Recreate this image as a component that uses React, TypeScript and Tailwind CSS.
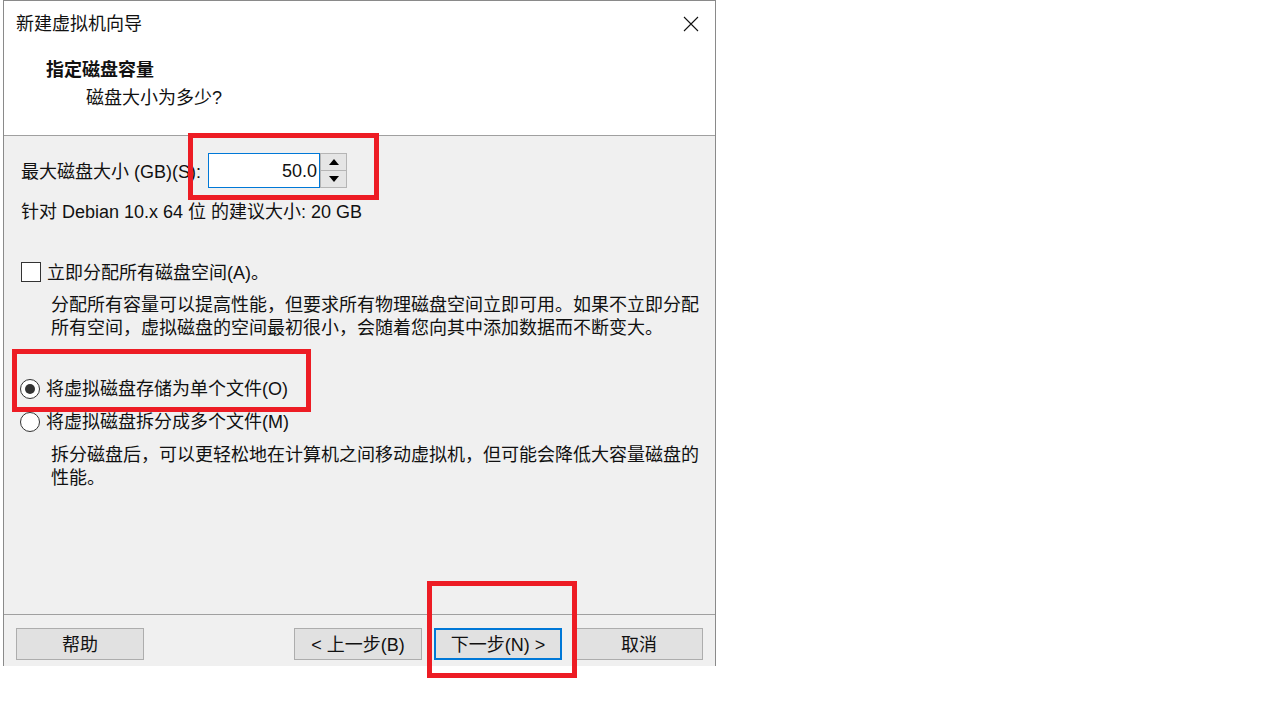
import React from "react";

const font = { fontFamily: '"Liberation Sans", "Noto Sans CJK SC", sans-serif' };

function CloseIcon() {
  return (
    <svg width="16" height="16" viewBox="0 0 16 16">
      <path d="M1 1 L15 15 M15 1 L1 15" stroke="#111" strokeWidth="1.1" fill="none" />
    </svg>
  );
}

function Spinner() {
  return (
    <div className="flex flex-col w-[27px] h-[35px] border border-[#b5b5b5] bg-[#e5e5e5]">
      <div className="flex-1 flex items-center justify-center border-b border-[#b5b5b5]">
        <svg width="10" height="6" viewBox="0 0 10 6">
          <path d="M0 6 L5 0 L10 6 Z" fill="#000" />
        </svg>
      </div>
      <div className="flex-1 flex items-center justify-center">
        <svg width="10" height="6" viewBox="0 0 10 6">
          <path d="M0 0 L5 6 L10 0 Z" fill="#000" />
        </svg>
      </div>
    </div>
  );
}

function Radio({ checked }: { checked?: boolean }) {
  return (
    <div className="w-[20px] h-[20px] rounded-full border border-[#333] bg-white flex items-center justify-center shrink-0">
      {checked && <div className="w-[10px] h-[10px] rounded-full bg-[#333]" />}
    </div>
  );
}

function Button({ label, primary }: { label: string; primary?: boolean }) {
  return (
    <div
      className={`w-[128px] h-[32px] flex items-center justify-center pt-[3px] bg-[#e1e1e1] ${
        primary ? "border-2 border-[#0078d7]" : "border border-[#adadad]"
      }`}
    >
      {label}
    </div>
  );
}

export default function App() {
  return (
    <div
      className="w-[1275px] h-[709px] bg-white relative text-[18px] leading-[23px] text-[#111]"
      style={font}
    >
      <div className="ml-[3px] w-[713px] h-[666px] border-l border-r border-t border-[#8a8a8a] flex flex-col bg-[#f0f0f0]">
        {/* header */}
        <div className="h-[135px] bg-white border-b border-[#a0a0a0] relative">
          <div className="pt-[12px] pl-[12px] flex">
            <span>新建虚拟机向导</span>
          </div>
          <div className="absolute right-[16px] top-[15px]">
            <CloseIcon />
          </div>
          <div className="mt-[23px] pl-[42px] font-bold">指定磁盘容量</div>
          <div className="mt-[5px] pl-[82px]">磁盘大小为多少?</div>
        </div>

        {/* body */}
        <div className="flex-1 pl-[17px] pt-[17px] border-b border-[#a0a0a0]">
          <div className="flex items-center h-[35px]">
            <div className="w-[187px] whitespace-nowrap pt-[3px]">最大磁盘大小 (GB)(S):</div>
            <div className="w-[112px] h-[35px] border border-[#0078d7] bg-white flex items-center justify-end pr-[2px] pt-[2px]">
              50.0
            </div>
            <Spinner />
          </div>
          <div className="mt-[13px] whitespace-nowrap">针对 Debian 10.x 64 位 的建议大小: 20 GB</div>

          <div className="mt-[36px] flex items-center h-[23px]">
            <div className="w-[20px] h-[20px] border-[1.5px] border-[#333] bg-white shrink-0" />
            <span className="ml-[6px] pt-[3px]">立即分配所有磁盘空间(A)。</span>
          </div>
          <div className="mt-[11px] ml-[30px] whitespace-nowrap">
            <div>分配所有容量可以提高性能，但要求所有物理磁盘空间立即可用。如果不立即分配</div>
            <div>所有空间，虚拟磁盘的空间最初很小，会随着您向其中添加数据而不断变大。</div>
          </div>

          <div className="mt-[32px] flex items-center h-[33px] -ml-[1px]">
            <Radio checked />
            <span className="ml-[6px] pt-[2px]">将虚拟磁盘存储为单个文件(O)</span>
          </div>
          <div className="flex items-center h-[33px] -ml-[1px]">
            <Radio />
            <span className="ml-[6px] pt-[2px]">将虚拟磁盘拆分成多个文件(M)</span>
          </div>
          <div className="mt-[6px] ml-[30px] whitespace-nowrap">
            <div>拆分磁盘后，可以更轻松地在计算机之间移动虚拟机，但可能会降低大容量磁盘的</div>
            <div>性能。</div>
          </div>
        </div>

        {/* footer */}
        <div className="h-[51px] pt-[13px] pl-[12px] flex">
          <Button label="帮助" />
          <div className="ml-[150px] flex gap-[12px]">
            <Button label="< 上一步(B)" />
            <Button label="下一步(N) >" primary />
            <div className="ml-[1px]">
              <Button label="取消" />
            </div>
          </div>
        </div>
      </div>

      {/* annotation boxes */}
      <div className="absolute left-[188px] top-[133px] w-[191px] h-[67px] border-[5px] border-[#ed1c24]" />
      <div className="absolute left-[12px] top-[349px] w-[299px] h-[63px] border-[5px] border-[#ed1c24]" />
      <div className="absolute left-[427px] top-[581px] w-[150px] h-[97px] border-[5px] border-[#ed1c24]" />
    </div>
  );
}
